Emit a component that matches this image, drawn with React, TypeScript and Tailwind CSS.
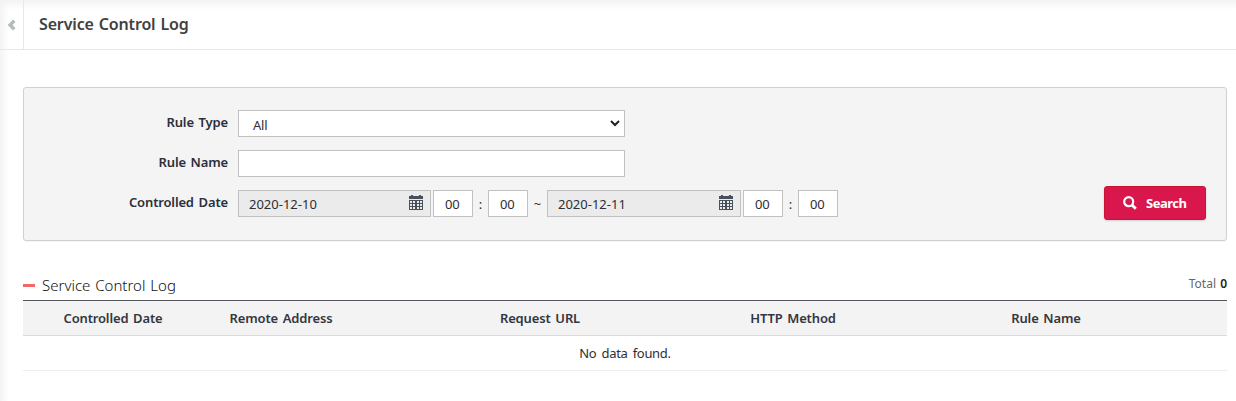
import { ReactNode } from "react";

const columns = [
  { label: "Controlled Date", cls: "w-[180px]" },
  { label: "Remote Address", cls: "w-[156px]" },
  { label: "Request URL", cls: "w-[362px]" },
  { label: "HTTP Method", cls: "w-[144px]" },
  { label: "Rule Name", cls: "w-[362px]" },
];

function CalendarIcon() {
  return (
    <svg width="14" height="15" viewBox="0 0 14 15" fill="#48505c" shapeRendering="crispEdges">
      <path d="M2 0h2v1h6V0h2v1h2v3H0V1h2z" />
      <path
        fillRule="evenodd"
        d="M0 5h14v10H0zM1 6v2h2V6zM4 6v2h2V6zM8 6v2h2V6zM11 6v2h2V6zM1 9v2h2V9zM4 9v2h2V9zM8 9v2h2V9zM11 9v2h2V9zM1 12v2h2v-2zM4 12v2h2v-2zM8 12v2h2v-2zM11 12v2h2v-2z"
      />
    </svg>
  );
}

function Row({ label, children }: { label: string; children?: ReactNode }) {
  return (
    <div className="flex h-[27px]">
      <div className="w-[204px] pt-[2px] text-right text-[13px] leading-[20px] font-semibold tracking-[-0.15px] text-[#2b2f3a] [word-spacing:1.5px]">
        {label}
      </div>
      <div className="ml-[10px] flex">{children}</div>
    </div>
  );
}

function DateBox({ value, cls }: { value: string; cls: string }) {
  return (
    <div className={`flex h-[27px] justify-between border border-[#c1c1c1] bg-[#ebebeb] pt-[4px] pr-[7px] pl-[10px] ${cls}`}>
      <span className="text-[13px] leading-[18px]">{value}</span>
      <CalendarIcon />
    </div>
  );
}

function TimeBox() {
  return (
    <div className="h-[27px] w-[40px] border border-[#c1c1c1] bg-white pt-[4px] pl-[11px] text-[13px] leading-[18px] tracking-[-0.2px]">
      00
    </div>
  );
}

function Sep({ children, cls }: { children: ReactNode; cls: string }) {
  return <span className={`pt-[4px] text-center text-[13px] leading-[20px] ${cls}`}>{children}</span>;
}

export default function App() {
  return (
    <div className="h-[401px] w-[1236px] overflow-hidden bg-white bg-[linear-gradient(to_right,#f4f4f4,rgba(255,255,255,0)_9px),linear-gradient(to_bottom,#f3f3f3,rgba(255,255,255,0)_10px)] font-['Noto_Sans',sans-serif] whitespace-nowrap text-[#2e2e34]">
      <header className="flex h-[50px] border-b border-[#e8e8e8]">
        <div className="flex w-[24px] items-center border-r border-[#e8e8e8] pl-[7px]">
          <svg width="9" height="12" viewBox="0 0 9 12" fill="none" stroke="#b6bbbe" strokeWidth="3.4">
            <path d="M7.3 1.7 3 6l4.3 4.3" />
          </svg>
        </div>
        <h1 className="pt-[13px] pl-[15px] text-[16px] leading-[22px] font-semibold tracking-[-0.15px] text-[#414141] [word-spacing:1px]">
          Service Control Log
        </h1>
      </header>

      <section className="mt-[37px] ml-[23px] flex h-[154px] w-[1204px] justify-between rounded-[3px] border border-[#d0d0d0] bg-[#f4f4f4] pt-[22px] pr-[20px] shadow-[0_1px_1px_rgba(0,0,0,0.04)]">
        <div className="flex flex-col gap-[13px]">
          <Row label="Rule Type">
            <div className="flex h-[27px] w-[387px] justify-between border border-[#c1c1c1] bg-white pt-[5px] pr-[4px] pl-[14px] text-[13px] leading-[18px]">
              <span className="tracking-[-0.2px]">All</span>
              <svg className="mt-[4px]" width="10" height="7" viewBox="0 0 10 7" fill="none" stroke="#222" strokeWidth="2">
                <path d="M1 1l4 4 4-4" />
              </svg>
            </div>
          </Row>
          <Row label="Rule Name">
            <div className="h-[27px] w-[387px] border border-[#c1c1c1] bg-white" />
          </Row>
          <Row label="Controlled Date">
            <DateBox value="2020-12-10" cls="mr-[2px] w-[193px]" />
            <TimeBox />
            <Sep cls="w-[15px]">:</Sep>
            <TimeBox />
            <Sep cls="w-[19px]">~</Sep>
            <DateBox value="2020-12-11" cls="mr-[2px] w-[194px]" />
            <TimeBox />
            <Sep cls="w-[15px]">:</Sep>
            <TimeBox />
          </Row>
        </div>
        <button className="mt-[76px] flex h-[34px] w-[102px] items-center rounded-[3px] border border-[#c9152f] bg-[#da174c] pl-[18px] text-[13px] leading-[18px] font-bold text-white shadow-[0_1px_2px_rgba(0,0,0,0.15)]">
          <svg width="14" height="14" viewBox="0 0 14 14" fill="none" stroke="white">
            <circle cx="5.7" cy="5.7" r="4.5" strokeWidth="2.2" />
            <path d="M9 9l3.8 3.8" strokeWidth="2.8" />
          </svg>
          <span className="ml-[9px] tracking-[-0.5px]">Search</span>
        </button>
      </section>

      <div className="mt-[32px] ml-[23px] flex h-[27px] w-[1204px] items-start">
        <span className="mt-[11px] h-[3px] w-[12px] bg-[#f4686c]" />
        <h2 className="ml-[7px] pt-[2px] text-[15px] leading-[20px] font-light text-[#111] [word-spacing:1px]">
          Service Control Log
        </h2>
        <div className="ml-auto pt-[2px] text-[12px] leading-[18px] text-[#666] [word-spacing:1px]">
          Total <b className="font-semibold text-[#222]">0</b>
        </div>
      </div>
      <table className="ml-[23px] w-[1204px] table-fixed border-separate border-spacing-0 text-[13px] leading-[20px]">
        <thead>
          <tr className="h-[36px]">
            {columns.map((c) => (
              <th
                key={c.label}
                className={`border-t border-b border-t-[#55555d] border-b-[#dadada] bg-[#f3f3f3] p-0 text-center font-semibold tracking-[-0.15px] text-[#33363f] [word-spacing:1.5px] ${c.cls}`}
              >
                {c.label}
              </th>
            ))}
          </tr>
        </thead>
        <tbody>
          <tr className="h-[35px]">
            <td colSpan={5} className="border-b border-[#ececec] p-0 text-center tracking-[-0.3px] [word-spacing:2px]">
              No data found.
            </td>
          </tr>
        </tbody>
      </table>
    </div>
  );
}
